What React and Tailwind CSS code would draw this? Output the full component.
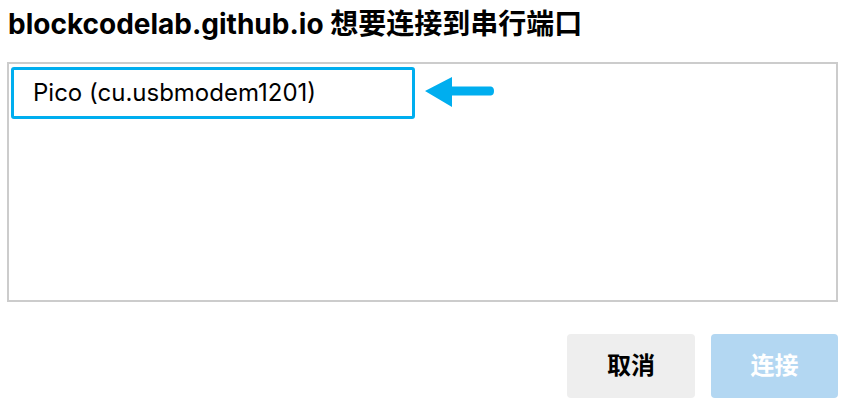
export default function App() {
  return (
    <div
      className="w-[848px] h-[406px] bg-white flex flex-col"
      style={{ fontFamily: '"Inter", "Noto Sans CJK SC", sans-serif' }}
    >
      <h1 className="pl-[8px] pt-[7px] h-[62px] text-[28px] leading-[34px] font-bold text-black">
        blockcodelab.github.io 想要连接到串行端口
      </h1>

      <div className="ml-[7px] w-[831px] h-[240px] border-2 border-[#cccccc] pt-[3px] pl-[2px]">
        <div className="flex items-center">
          <div className="w-[404px] h-[52px] border-[3px] border-[#00aeef] rounded-[3px] flex items-center pl-[19px] text-[24px] text-black">
            Pico (cu.usbmodem1201)
          </div>
          <svg width="72" height="32" viewBox="0 0 72 32" className="ml-[10px]">
            <path d="M0 14 L27 0 L27 9.5 L66 9.5 Q69 10 69 14 Q69 18 66 18.5 L27 18.5 L27 30 Z" fill="#00aeef" />
          </svg>
        </div>
      </div>

      <div className="flex justify-end gap-[16px] pr-[10px] mt-[32px]">
        <button className="w-[128px] h-[64px] rounded-[4px] bg-[#eeeeee] text-[24px] font-bold text-black">
          取消
        </button>
        <button className="w-[127px] h-[64px] rounded-[4px] bg-[#b3d7f2] text-[24px] font-bold text-white">
          连接
        </button>
      </div>
    </div>
  );
}
